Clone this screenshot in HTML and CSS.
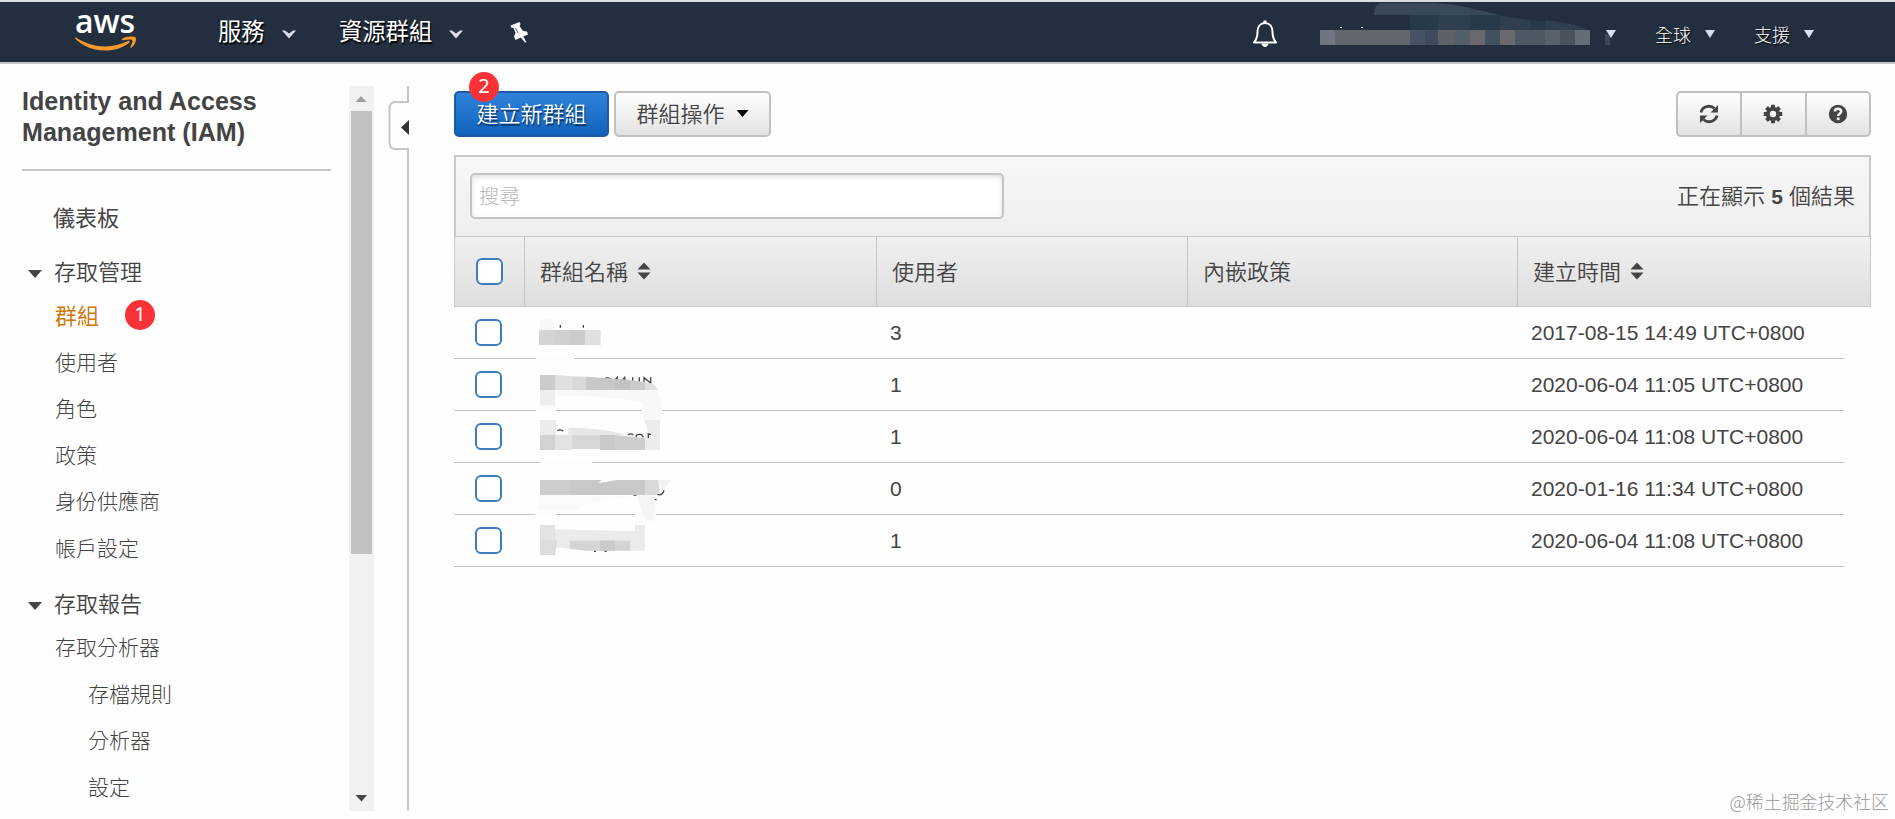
FILE: index.html
```html
<!DOCTYPE html>
<html lang="zh-Hant">
<head>
<meta charset="utf-8">
<title>IAM</title>
<link rel="stylesheet" href="styles.css">
</head>
<body>
<header class="nav">
  <div class="logo">
    <span class="logo-text">aws</span>
    <svg class="smile" width="62" height="16" viewBox="0 0 62 16"><path d="M1 1.500C18 12.500 37 13 53 5C54.500 4.500 55.500 5.500 54 7C47 12 40 14.500 30 14.500C18 14.500 8 10 .5 3C0 2 .3 1 1 1.500Z" fill="#f79a2b"/><path d="M47 3C51 0 59 0 60.500 1.500C62 3.500 60 9 56.500 11.500C55.500 12 55 11.500 55.500 10.500C57 8 58 5 57.300 4.200C56.500 3.200 52 3.500 48.500 4.200C47 4.300 46 3.700 47 3Z" fill="#f79a2b"/></svg>
  </div>
  <div class="nav-item services">服務<svg width="14" height="9" viewBox="0 0 14 9"><path d="M0 .5H3L7 3.500L11 .5H14L7 8.500Z" fill="#dcdce8"/></svg></div>
  <div class="nav-item resources">資源群組<svg width="14" height="9" viewBox="0 0 14 9"><path d="M0 .5H3L7 3.500L11 .5H14L7 8.500Z" fill="#dcdce8"/></svg></div>
  <svg class="pin" width="19" height="21" viewBox="0 0 19 21"><path d="M.5 3.500L9.500 0L10.500 2L9.500 4L13 9L17 9.500L18 12.500L13.300 14.500L16.500 20.500L14.800 20.200L10.800 15.500L5.500 18L4 14.500L5.500 11L3.500 6L1 5.500Z" fill="#fff"/><path d="M5.500 6L8 11" stroke="#56616e" stroke-width="1"/></svg>
  <div class="nav-right">
    <svg class="bell" width="26" height="28" viewBox="0 0 26 28"><path d="M2 22.500C5 19 5.500 16.500 5.500 12C5.500 6.500 8.500 3 13 3S20.500 6.500 20.500 12C20.500 16.500 21 19 24 22.500Z" fill="none" stroke="#fff" stroke-width="2" stroke-linejoin="round"/><path d="M13 0.500V3" stroke="#fff" stroke-width="3"/><path d="M9.500 23.500H16.500C16 28 10 28 9.500 23.500Z" fill="#fff"/></svg>
    <svg class="account" width="300" height="60" viewBox="0 0 300 60">
      <path d="M64 13Q64 3 70 1H125Q145 2 160 6L190 13Z" fill="#394955"/>
      <path d="M100 13H190L210 17L250 21Q274 25 276 28H100Z" fill="#28394a"/>
      <path d="M128 13H160V28H128ZM190 14L220 18V28H190ZM235 18Q270 22 276 28H235Z" fill="#303f4e"/>
      <rect x="10" y="28" width="15" height="15" fill="#707680"/><rect x="25" y="28" width="75" height="15" fill="#62676d"/><rect x="100" y="28" width="15" height="15" fill="#465362"/><rect x="115" y="28" width="13" height="15" fill="#3d4b5a"/><rect x="128" y="28" width="17" height="15" fill="#5c6268"/><rect x="145" y="28" width="15" height="15" fill="#555f69"/><rect x="160" y="28" width="15" height="15" fill="#6a686e"/><rect x="175" y="28" width="15" height="15" fill="#435160"/><rect x="190" y="28" width="15" height="15" fill="#6a696f"/><rect x="205" y="28" width="30" height="15" fill="#4c5965"/><rect x="235" y="28" width="15" height="15" fill="#56616c"/><rect x="250" y="28" width="15" height="15" fill="#49535f"/><rect x="265" y="28" width="15" height="15" fill="#626d77"/>
      <path d="M30 25.500h2M51 25.500h2" stroke="#fff" stroke-width="1"/><path d="M295 32h6v11h-6z" fill="#3a4856"/>
    </svg>
    <i class="tri t1"></i>
    <span class="small region">全球</span><i class="tri t2"></i>
    <span class="small support">支援</span><i class="tri t3"></i>
  </div>
</header>
<div class="layout">
  <aside class="side">
    <h1>Identity and Access<br>Management (IAM)</h1>
    <nav class="menu">
      <a class="item dash">儀表板</a>
      <a class="item head"><i class="arrow"></i>存取管理</a>
      <a class="item active">群組<b class="badge one">1</b></a>
      <a class="item">使用者</a>
      <a class="item">角色</a>
      <a class="item">政策</a>
      <a class="item">身份供應商</a>
      <a class="item">帳戶設定</a>
      <a class="item head second"><i class="arrow"></i>存取報告</a>
      <a class="item">存取分析器</a>
      <a class="item sub">存檔規則</a>
      <a class="item sub">分析器</a>
      <a class="item sub">設定</a>
    </nav>
  </aside>
  <div class="scroll">
    <svg width="25" height="25" viewBox="0 0 25 25"><path d="M6.500 16L12 10L17.500 16Z" fill="#a0a0a0"/></svg>
    <div class="thumb"></div>
    <svg class="down" width="25" height="25" viewBox="0 0 25 25"><path d="M6.500 9L12.500 15.500L18 9Z" fill="#444"/></svg>
  </div>
  <svg class="splitter" width="22" height="725" viewBox="0 0 22 725"><path d="M20 0V16H7Q1.500 16 1.500 23V56Q1.500 63 7 63H20V725" fill="none" stroke="#c6c6c6" stroke-width="2"/><path d="M21 34V49L13 41.500Z" fill="#333"/></svg>
  <main class="main">
    <div class="toolbar">
      <div class="btn primary">建立新群組<b class="badge two">2</b></div>
      <div class="btn">群組操作<i class="caret"></i></div>
      <div class="tools">
        <span><svg width="20" height="20" viewBox="0 0 20 20"><path d="M2 8.500A8 7.500 0 0 1 15.500 4.500M18 11.500A8 7.500 0 0 1 4.500 15.500" fill="none" stroke="#444" stroke-width="2.800"/><path d="M19 1V8.500H11.500ZM1 19V11.500H8.500Z" fill="#444"/></svg></span>
        <span><svg width="20" height="20" viewBox="0 0 20 20"><circle cx="10" cy="10" r="5.200" fill="none" stroke="#444" stroke-width="4"/><path d="M10 .8V4M10 16V19.200M.8 10H4M16 10H19.200M3.500 3.500L5.700 5.700M14.300 14.300L16.500 16.500M3.500 16.500L5.700 14.300M14.300 5.700L16.500 3.500" stroke="#444" stroke-width="4"/></svg></span>
        <span><svg width="20" height="20" viewBox="0 0 20 20"><circle cx="10" cy="10" r="9.200" fill="#444"/><path d="M6.800 7.500C7 3.800 13.300 3.900 13.200 7.500C13.100 9.500 10.300 9.500 10.200 12" fill="none" stroke="#f4f4f4" stroke-width="2.600"/><rect x="8.800" y="13.500" width="2.800" height="2.600" fill="#f4f4f4"/></svg></span>
      </div>
    </div>
    <div class="filter"><div class="search">搜尋</div><div class="count">正在顯示 <b>5</b> 個結果</div></div>
    <div class="thead">
      <div class="c0"><i class="check"></i></div>
      <div class="c1">群組名稱<svg class="sort" width="14" height="18" viewBox="0 0 14 18"><path d="M.5 7.500L7 .5L13.500 7.500ZM.5 10.500L7 17.500L13.500 10.500Z" fill="#444"/></svg></div>
      <div class="c2">使用者</div>
      <div class="c3">內嵌政策</div>
      <div class="c4">建立時間<svg class="sort" width="14" height="18" viewBox="0 0 14 18"><path d="M.5 7.500L7 .5L13.500 7.500ZM.5 10.500L7 17.500L13.500 10.500Z" fill="#444"/></svg></div>
    </div>
    <div class="tbody">
      <div class="row"><i class="check"></i><span class="users">3</span><span class="date">2017-08-15 14:49 UTC+0800</span></div>
      <div class="row"><i class="check"></i><span class="users">1</span><span class="date">2020-06-04 11:05 UTC+0800</span></div>
      <div class="row"><i class="check"></i><span class="users">1</span><span class="date">2020-06-04 11:08 UTC+0800</span></div>
      <div class="row"><i class="check"></i><span class="users">0</span><span class="date">2020-01-16 11:34 UTC+0800</span></div>
      <div class="row"><i class="check"></i><span class="users">1</span><span class="date">2020-06-04 11:08 UTC+0800</span></div>
      <svg class="mosaic" width="140" height="245" viewBox="285 45 420 735">
        <path d="M288 168H403V180H288ZM288 320H348V340H288ZM606 320H667V340H606ZM300 480H455V492H300ZM285 636H347V650H285ZM585 636H648V670H585Z" fill="#fcfcfc"/>
        <path d="M300 90V62Q320 48 345 68V90Z" fill="#f8f8f8"/>
        <path d="M361 75v8M430 75v8" stroke="#444" stroke-width="4"/>
        <rect x="297" y="90" width="48" height="45" fill="#d4d4d4"/><rect x="345" y="90" width="45" height="45" fill="#d0d0d0"/><rect x="390" y="90" width="45" height="45" fill="#cbcbcb"/><rect x="435" y="90" width="47" height="45" fill="#e0e0e0"/>
        <path d="M300 270H650Q670 300 663 360H610V310Q500 285 345 287V320H300Z" fill="#f8f8f8"/><rect x="300" y="270" width="45" height="45" fill="#eee"/>
        <path d="M492 237q10 -7 20 0M524 240l8 -8v12M548 240l6 -8 2 12M578 232v14M598 232v16M612 250V233l20 16V232" fill="none" stroke="#444" stroke-width="4"/>
        <path d="M300 225H345V270H300Z" fill="#c9cbcc"/><path d="M345 225L395 229V270H345Z" fill="#dedfe0"/><path d="M395 229L438 230V270H395Z" fill="#d9d9d9"/><path d="M438 230L525 236V270H438Z" fill="#c8c8c8"/><path d="M525 236L570 240V270H525Z" fill="#c5c0c2"/><path d="M570 240L615 246V270H570Z" fill="#cbcbcf"/><path d="M615 246Q648 250 652 270H615Z" fill="#dedede"/>
        <path d="M300 360H348V405H300ZM615 360H660V450H615V405Q630 390 615 370Z" fill="#ececec"/><path d="M385 383Q480 382 560 405H385Z" fill="#e7e7e7"/>
        <path d="M352 392q10 -6 18 2M564 405q8 -7 16 0M588 412q0 -9 10 -9t12 9M625 414v-12l8 1" fill="none" stroke="#444" stroke-width="4"/>
        <rect x="300" y="405" width="45" height="45" fill="#d2d2d2"/><rect x="345" y="405" width="50" height="45" fill="#e2e3e3"/><rect x="395" y="405" width="85" height="42" fill="#d6d7d7"/><rect x="480" y="405" width="45" height="45" fill="#c9c9c9"/><path d="M525 405L615 414V450H525Z" fill="#cecece"/>
        <path d="M300 585H600Q500 600 440 612L400 632H290Z" fill="#fafafa"/><path d="M590 585H648L640 660H615Z" fill="#f5f5f5"/><path d="M655 540H692L668 575Z" fill="#f1f1f1"/>
        <path d="M652 583q16 5 20 -12M580 585h10M644 599h6" fill="none" stroke="#444" stroke-width="4"/>
        <path d="M300 540H485L475 550L530 540H615V585H300Z" fill="#c8c8c8"/><rect x="300" y="540" width="90" height="45" fill="#cdcdcd"/><path d="M615 540H655L660 575L648 585H615Z" fill="#d9d9d9"/>
        <path d="M345 688L585 694V675H615V752H440L345 742Z" fill="#ebebeb"/><rect x="300" y="675" width="45" height="45" fill="#e3e3e3"/><path d="M300 720H352L345 765H300Z" fill="#dcdcdc"/><path d="M390 722H570V752H440L390 746Z" fill="#d4d4d4"/><rect x="480" y="722" width="45" height="30" fill="#cacaca"/>
        <path d="M462 754h6M494 754h6" stroke="#444" stroke-width="4"/>
      </svg>
    </div>
  </main>
</div>
<div class="watermark">@稀土掘金技术社区</div>
</body>
</html>
```
FILE: styles.css
```css
* { box-sizing: border-box; }
body { margin: 0; width: 1895px; height: 819px; overflow: hidden; position: relative; background: #fefefe; color: #444; font-family: "Liberation Sans", "Noto Sans CJK TC", sans-serif; }
i { font-style: normal; }
svg { display: block; flex: none; }
.nav { height: 64px; border-top: 2px solid #d9dee3; border-bottom: 2px solid #c3c5cf; background: #232f3e; display: flex; align-items: flex-start; color: #fff; }
.logo { width: 62px; margin-left: 74px; height: 60px; }
.logo-text { display: block; font: 600 32px/44px "Open Sans", sans-serif; height: 44px; margin-top: -3px; text-align: center; }
.smile { margin-top: -7px; margin-left: 1px; }
.nav-item { display: flex; align-items: center; font-size: 23.300px; height: 60px; line-height: 62px; font-weight: 400; text-shadow: 1px 2px 1px #000; }
.nav-item svg { margin-left: 17px; margin-top: 4px; }
.services { margin-left: 82px; width: 121px; }
.resources { width: 171px; }
.pin { margin-top: 20px; }
.nav-right { margin-left: 723px; display: flex; height: 60px; }
.bell { margin-top: 18px; }
.account { margin-left: 32px; margin-right: -4px; }
.tri { width: 10px; height: 8px; background: #d5e3ee; clip-path: polygon(0 0, 100% 0, 50% 100%); margin-top: 28px; flex: none; }
.small { font-size: 18px; margin-top: 4px; height: 56px; font-weight: 300; line-height: 60px; text-shadow: 1px 1px 1px #000; }
.region { margin-left: 39px; }
.t2 { margin-left: 14px; }
.support { margin-left: 39px; }
.t3 { margin-left: 14px; }
.layout { display: flex; height: 755px; }
.side { width: 349px; padding: 22px 0 0 21px; }
h1 { margin: 0 0 0 1px; font-size: 25.100px; line-height: 31px; width: 309px; height: 85px; border-bottom: 2px solid #c6c6c6; }
.menu { display: flex; flex-direction: column; padding-top: 25px; }
.item { position: relative; display: block; height: 46.500px; line-height: 44px; padding-left: 34px; font-size: 21px; font-weight: 300; white-space: nowrap; }
.dash { height: 55px; line-height: 46px; font-size: 22px; padding-left: 32px; font-weight: 400; }
.head { height: 43px; font-size: 22px; padding-left: 33px; font-weight: 350; line-height: 44px; }
.second { margin-top: 10px; }
.active { color: #d17a0c; font-size: 22px; font-weight: 400; line-height: 46px; }
.sub { padding-left: 67px; }
.arrow { position: absolute; left: 7px; top: 19px; width: 14px; height: 8px; background: #444; clip-path: polygon(0 0, 100% 0, 50% 100%); }
.badge { position: absolute; width: 30px; height: 30px; border-radius: 50%; background: #fa3237; color: #fff; font: 400 20px/28px "Noto Sans", sans-serif; text-align: center; text-shadow: none; }
.one { left: 104px; top: 6px; }
.two { left: 13px; top: -21px; }
.scroll { width: 25px; height: 725px; margin-top: 22px; background: #f1f1f1; display: flex; flex-direction: column; }
.thumb { height: 443px; margin: 0 2px; background: #c1c1c1; }
.down { margin-top: auto; }
.splitter { margin: 22px 0 0 14px; }
.main { margin-left: 44px; width: 1417px; padding-top: 27px; }
.toolbar { display: flex; height: 64px; }
.btn { position: relative; height: 46px; width: 157px; border: 2px solid #c0c0c0; border-radius: 5px; background: linear-gradient(#fff, #e2e2e2); display: flex; align-items: center; justify-content: center; font-size: 22px; line-height: 30px; font-weight: 350; padding-top: 1px; }
.primary { width: 155px; margin-right: 5px; background: linear-gradient(#2f83db, #1062bc); border-color: #1c5ba3; color: #fff; text-shadow: 1px 2px 1px #0a3260; }
.caret { width: 12px; height: 7px; margin-left: 12px; margin-top: -2px; background: #000; clip-path: polygon(0 0, 100% 0, 50% 100%); }
.tools { margin-left: auto; display: flex; width: 195px; height: 46px; border: 2px solid #c0c0c0; border-radius: 5px; background: linear-gradient(#fff, #e2e2e2); }
.tools span { flex: 1; display: flex; align-items: center; justify-content: center; padding-bottom: 1px; }
.tools span + span { border-left: 2px solid #c0c0c0; }
.filter { height: 81px; border: 2px solid #c9c9c9; border-bottom: 0; background: linear-gradient(#f7f7f7, #eee); display: flex; justify-content: space-between; align-items: flex-start; padding: 16px 14px 0; }
.search { width: 534px; height: 46px; border: 2px solid #c4c4c4; border-radius: 5px; background: #fff; box-shadow: inset 0 2px 5px #ddd; font-size: 20.500px; font-weight: 300; color: #b8b8b8; padding-left: 7px; line-height: 43px; }
.count { font-size: 22px; line-height: 48px; font-weight: 350; }
.count b { font-size: 21px; }
.thead { height: 71px; border: 1px solid #c9c9c9; background: linear-gradient(#f0f0f0, #dedede); display: flex; font-size: 22px; font-weight: 350; line-height: 30px; }
.thead div { display: flex; align-items: center; padding-left: 15px; padding-top: 2px; }
.thead .c0 { width: 69px; padding-left: 21px; padding-top: 0; }
.thead .c1 { width: 352px; }
.thead .c2 { width: 311px; }
.thead .c3 { width: 330px; }
.thead .c4 { flex: 1; }
.thead div + div { border-left: 1px solid #c4c4c4; }
.sort { margin-left: 9px; margin-top: -4px; }
.check { width: 27px; height: 27px; border: 2px solid #3f7cbd; border-radius: 6px; background: #fff; flex: none; }
.tbody { position: relative; width: 1390px; }
.row { height: 52px; border-bottom: 1px solid #c4c4c4; display: flex; align-items: center; padding-left: 21px; font-size: 21px; }
.users { margin-left: 388px; width: 641px; }
.mosaic { position: absolute; left: 81px; top: 8px; }
.watermark { position: absolute; right: 6px; bottom: 6px; font: 300 17.900px/24px "Noto Sans CJK SC", sans-serif; color: #999; }
```
